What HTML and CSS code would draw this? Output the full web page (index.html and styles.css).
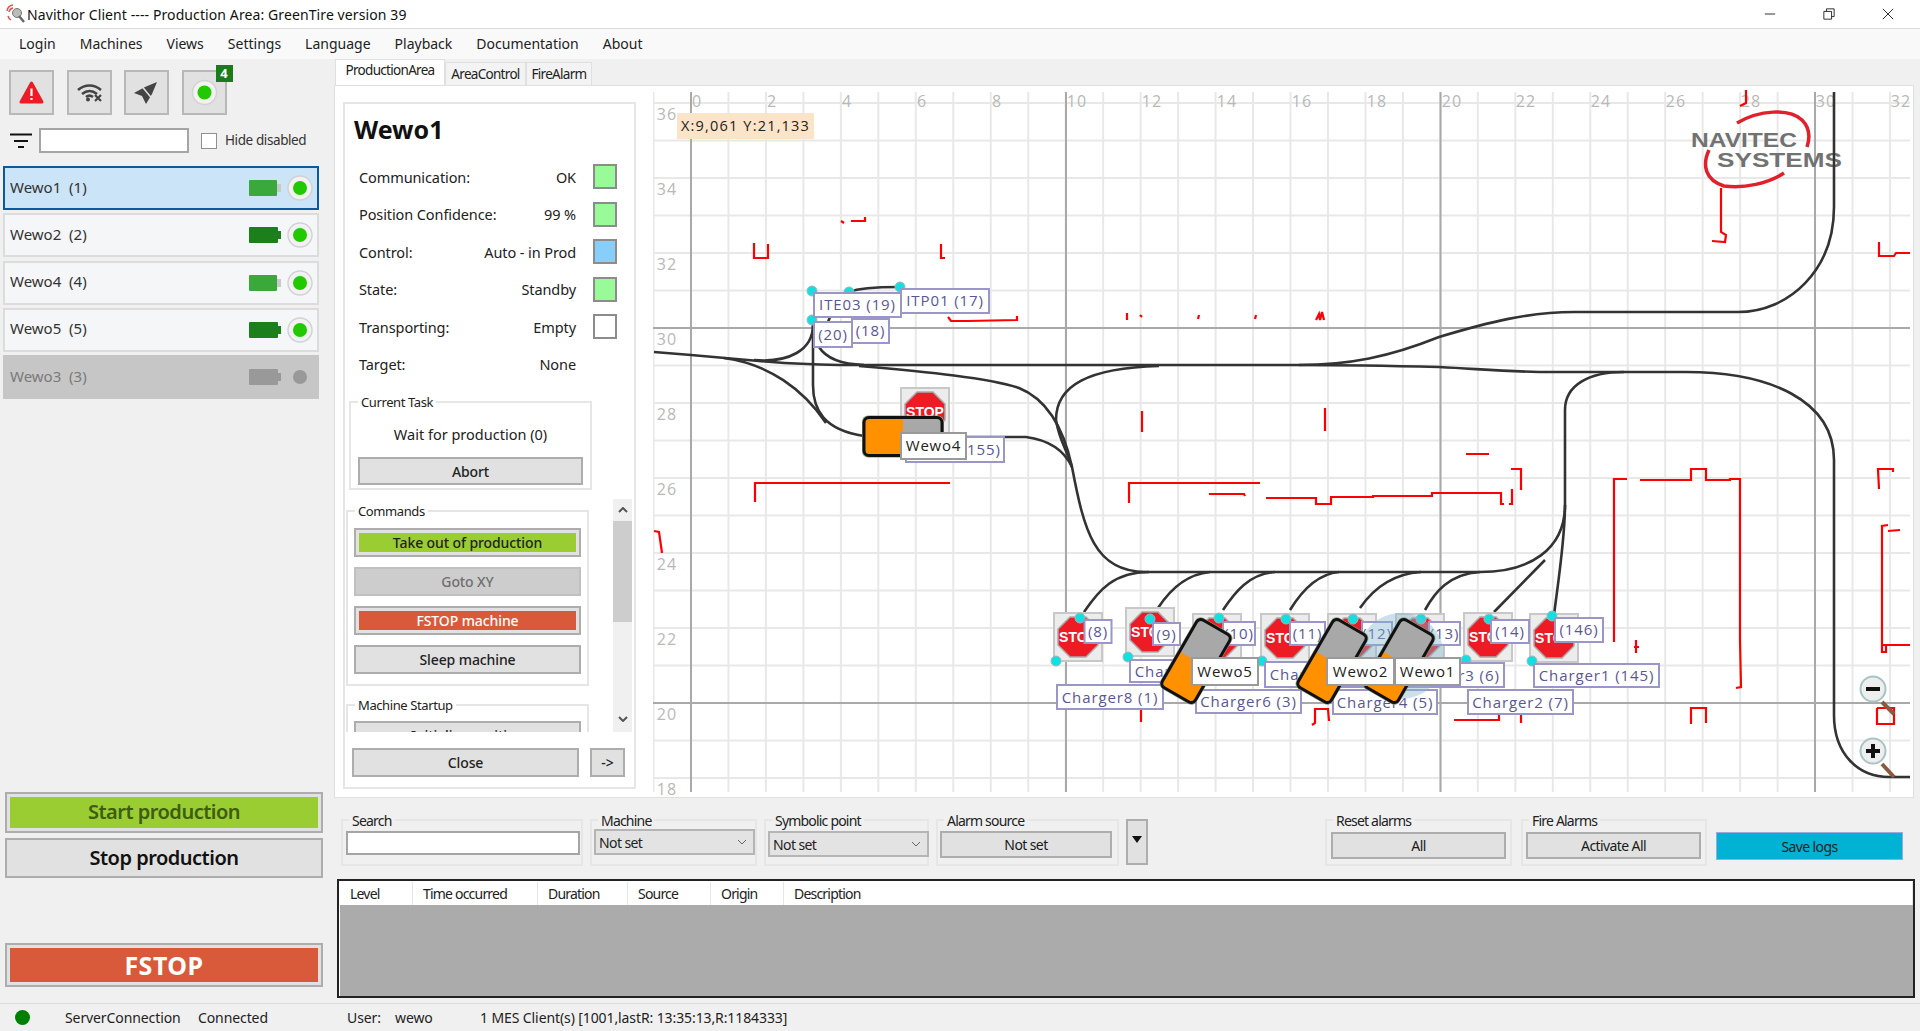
FILE: index.html
```html
<!DOCTYPE html>
<html lang="en">
<head>
<meta charset="utf-8">
<title>Navithor Client</title>
<link rel="stylesheet" href="styles.css">
</head>
<body>
<div class="window">
  <header class="titlebar">
    <svg class="app-icon" viewBox="0 0 20 20"><path d="M1 7a7 7 0 0 1 6-6M3 8a5 5 0 0 1 4-4M2 12a6 6 0 0 0 3 4" class="app-waves"/><circle cx="11" cy="9" r="4.5" class="app-glass"/><path d="M13 12l5 6" class="app-handle"/></svg>
    <span class="title-text">Navithor Client ---- Production Area: GreenTire version 39</span>
    <div class="win-controls">
      <svg class="win-btn" viewBox="0 0 14 14"><path d="M1 7h12"/></svg>
      <svg class="win-btn" viewBox="0 0 14 14"><path d="M1 4h9v9H1zM4 4V1h9v9h-3"/></svg>
      <svg class="win-btn" viewBox="0 0 14 14"><path d="M1 1l12 12M13 1L1 13"/></svg>
    </div>
  </header>
  <nav class="menubar">
    <span>Login</span><span>Machines</span><span>Views</span><span>Settings</span><span>Language</span><span>Playback</span><span>Documentation</span><span>About</span>
  </nav>
  <div class="main">
    <aside class="left">
      <div class="toolbar">
        <div class="tool">
          <svg class="tool-icon" viewBox="0 0 45 45"><path class="ic-alert" d="M22.500 13L33 32H12z"/><path class="ic-bang" d="M22.500 18.500v7.500M22.500 28v2"/></svg>
        </div>
        <div class="tool">
          <svg class="tool-icon" viewBox="0 0 45 45"><path class="ic-wifi" d="M11 20c7-6 16-6 23 0M15 24c5-4 10-4 15 0M19 27c2-1.500 5-1.500 7 0"/><circle class="ic-fill" cx="21" cy="29.500" r="2"/><path class="ic-x" d="M28 25l6 6M34 25l-6 6"/></svg>
        </div>
        <div class="tool">
          <svg class="tool-icon" viewBox="0 0 45 45"><path class="ic-fill" d="M33 12L21 17L10 23L18 26L22 34L28 24Z"/><path class="ic-slash" d="M16 14L30 31"/></svg>
        </div>
        <div class="tool tool-badged">
          <svg class="tool-icon" viewBox="0 0 45 45"><circle class="dot-ring" cx="22.500" cy="22.500" r="12"/><circle class="dot-on" cx="22.500" cy="22.500" r="7"/></svg>
          <span class="badge">4</span>
        </div>
      </div>
      <div class="filter-row">
        <svg class="filter-icon" viewBox="0 0 22 16"><path d="M0 1.500h22M4 8h14M8 14h6"/></svg>
        <div class="input filter-input"></div>
        <div class="checkbox"></div>
        <span class="hide-label">Hide disabled</span>
      </div>
      <div class="machine-list">
        <div class="machine selected"><span class="machine-name">Wewo1&nbsp; (1)</span><svg class="battery" viewBox="0 0 32 16"><rect class="bat-light" width="28" height="16" rx="1"/><rect class="bat-nub-light" x="28" y="4" width="4" height="8"/></svg><svg class="status" viewBox="0 0 26 26"><circle class="dot-ring" cx="13" cy="13" r="12"/><circle class="dot-on" cx="13" cy="13" r="7"/></svg></div>
        <div class="machine"><span class="machine-name">Wewo2&nbsp; (2)</span><svg class="battery" viewBox="0 0 32 16"><rect class="bat-dark" width="29" height="16" rx="1"/><rect class="bat-dark" x="29" y="4" width="3" height="8"/></svg><svg class="status" viewBox="0 0 26 26"><circle class="dot-ring" cx="13" cy="13" r="12"/><circle class="dot-on" cx="13" cy="13" r="7"/></svg></div>
        <div class="machine"><span class="machine-name">Wewo4&nbsp; (4)</span><svg class="battery" viewBox="0 0 32 16"><rect class="bat-light" width="28" height="16" rx="1"/><rect class="bat-nub-light" x="28" y="4" width="4" height="8"/></svg><svg class="status" viewBox="0 0 26 26"><circle class="dot-ring" cx="13" cy="13" r="12"/><circle class="dot-on" cx="13" cy="13" r="7"/></svg></div>
        <div class="machine"><span class="machine-name">Wewo5&nbsp; (5)</span><svg class="battery" viewBox="0 0 32 16"><rect class="bat-dark" width="29" height="16" rx="1"/><rect class="bat-dark" x="29" y="4" width="3" height="8"/></svg><svg class="status" viewBox="0 0 26 26"><circle class="dot-ring" cx="13" cy="13" r="12"/><circle class="dot-on" cx="13" cy="13" r="7"/></svg></div>
        <div class="machine disabled"><span class="machine-name">Wewo3&nbsp; (3)</span><svg class="battery" viewBox="0 0 32 16"><rect class="bat-off" width="29" height="16" rx="1"/><rect class="bat-off" x="29" y="4" width="3" height="8"/></svg><svg class="status" viewBox="0 0 26 26"><circle class="dot-off" cx="13" cy="13" r="7"/></svg></div>
      </div>
      <div class="prod-buttons">
        <div class="btn big big-start"><span>Start production</span></div>
        <div class="btn big big-stop"><span>Stop production</span></div>
        <div class="btn big big-fstop"><span>FSTOP</span></div>
      </div>
    </aside>
    <section class="right">
      <div class="tabs">
        <span class="tab active">ProductionArea</span>
        <span class="tab tab-ac">AreaControl</span>
        <span class="tab tab-fa">FireAlarm</span>
      </div>
      <div class="panel">
        <div class="machine-panel">
          <h1 class="panel-title">Wewo1</h1>
          <div class="info-rows">
            <div class="info"><span>Communication:</span><span class="val">OK</span><i class="swatch sw-green"></i></div>
            <div class="info"><span>Position Confidence:</span><span class="val">99 %</span><i class="swatch sw-green"></i></div>
            <div class="info"><span>Control:</span><span class="val">Auto - in Prod</span><i class="swatch sw-blue"></i></div>
            <div class="info"><span>State:</span><span class="val">Standby</span><i class="swatch sw-green"></i></div>
            <div class="info"><span>Transporting:</span><span class="val">Empty</span><i class="swatch sw-white"></i></div>
            <div class="info"><span>Target:</span><span class="val">None</span><i class="swatch sw-none"></i></div>
          </div>
          <div class="group task-group">
            <span class="group-label">Current Task</span>
            <div class="task-name">Wait for production (0)</div>
            <div class="btn cmd abort">Abort</div>
          </div>
          <div class="scroller">
            <div class="scroll-content">
              <div class="group cmd-group">
                <span class="group-label">Commands</span>
                <div class="btn cmd cmd-take"><span>Take out of production</span></div>
                <div class="btn cmd cmd-off">Goto XY</div>
                <div class="btn cmd cmd-fstop"><span>FSTOP machine</span></div>
                <div class="btn cmd">Sleep machine</div>
              </div>
              <div class="group start-group">
                <span class="group-label">Machine Startup</span>
                <div class="btn cmd">Initialize position</div>
              </div>
            </div>
            <div class="scrollbar">
              <svg class="sb-arrow" viewBox="0 0 10 6"><path d="M1 5l4-4 4 4"/></svg>
              <div class="sb-thumb"></div>
              <svg class="sb-arrow sb-bottom" viewBox="0 0 10 6"><path d="M1 1l4 4 4-4"/></svg>
            </div>
          </div>
          <div class="close-row">
            <div class="btn cmd close">Close</div>
            <div class="btn cmd arrow">-&gt;</div>
          </div>
        </div>
        <div class="map">
          <svg class="map-svg" viewBox="650 90 1262 706">
            <defs>
              <pattern id="grid" patternUnits="userSpaceOnUse" x="691" y="102" width="37.47" height="37.5">
                <rect class="grid-minor" width="2" height="37.500"/>
                <rect class="grid-minor" width="37.470" height="2"/>
              </pattern>
              <g id="stop">
                <rect class="stop-box" x="-24" y="-24" width="48" height="48"/>
                <polygon class="stop-oct" points="-8,-20 8,-20 20,-8 20,8 8,20 -8,20 -20,8 -20,-8"/>
                <text class="stop-text" x="0" y="5">STOP</text>
              </g>
              <g id="robot">
                <rect class="robot-halo" x="-21" y="-41" width="42" height="82" rx="6"/>
                <rect class="robot-orange" x="-19" y="-39" width="38" height="78" rx="5"/>
                <path class="robot-gray" d="M-19 0V-34a5 5 0 0 1 5-5H14a5 5 0 0 1 5 5V0Z"/>
                <rect class="robot-line" x="-19" y="-39" width="38" height="78" rx="5"/>
              </g>
            </defs>
            <rect x="654" y="92" width="1257" height="700" fill="url(#grid)"/>
            <path class="grid-major" d="M692 92V792M1067 92V792M1441.500 92V792M1816 92V792M654 328H1911M654 703H1911"/>

            <g class="axis">
              <text x="698" y="107">0</text><text x="773" y="107">2</text><text x="848" y="107">4</text><text x="923" y="107">6</text><text x="998" y="107">8</text><text x="1078" y="107">10</text><text x="1153" y="107">12</text><text x="1228" y="107">14</text><text x="1303" y="107">16</text><text x="1378" y="107">18</text><text x="1453" y="107">20</text><text x="1527" y="107">22</text><text x="1602" y="107">24</text><text x="1677" y="107">26</text><text x="1752" y="107">28</text><text x="1827" y="107">30</text><text x="1902" y="107">32</text>
              <text x="668" y="120">36</text><text x="668" y="195">34</text><text x="668" y="270">32</text><text x="668" y="345">30</text><text x="668" y="420">28</text><text x="668" y="495">26</text><text x="668" y="570">24</text><text x="668" y="645">22</text><text x="668" y="720">20</text><text x="668" y="795">18</text>
            </g>

            <path class="wall" d="M842 221l3 2M852 221H866V217M755 243V258H769V244M942 244V258H946M949 317l3 4H968L1018 320V316M1128 313V320M1141 315l2 2M1200 315l-1 4M1257 315l-1 4M1317 320l3-6 1 6 2-8 2 8M1143 411V432M1326 408V431M1467 454H1490M1512 469H1522V490M1513 489V504H1510M1130 503V483H1141L1261 483M1210 494H1245L1246 496M1267 498H1317V504H1332V497H1374V496H1433V493H1502V504H1505M1615 642V479H1628M1641 480H1692V469H1707V480H1731V479H1741V640L1742 687L1737 688M1637 640V653M1635 647H1640M1880 489L1879 469H1894V472M1883 652V526L1889 525M1889 531L1901 530M1883 645H1911M1883 645V652H1887V645M1692 724V708H1707V723M1878 708V724H1895V708H1878M1129 709H1142V722M1313 725L1316 723V709H1329L1330 721M1455 720H1500V715M1522 715V723M1747 90V103L1741 106M1722 188V232L1727 235L1726 242L1713 241M1880 242V256H1895L1897 253H1911M756 502V483H951M655 531L660 532L663 553"/>

            <g class="logo">
              <path class="logo-ring" d="M1738 123C1760 110 1790 108 1803 120C1811 128 1811 138 1808 147M1710 150C1703 165 1706 180 1725 186C1745 189 1770 183 1785 173"/>
              <text class="logo-text" x="1692" y="147" textLength="106" lengthAdjust="spacingAndGlyphs">NAVITEC</text>
              <text class="logo-text" x="1718" y="167" textLength="125" lengthAdjust="spacingAndGlyphs">SYSTEMS</text>
            </g>

            <path class="track" d="M655 352L692 355L760 361C775 362 790 364 840 365L1300 365C1340 365 1400 366 1440 367C1480 369 1500 371 1540 372L1687 372C1770 372 1835 400 1835 460L1835 715C1835 755 1860 777 1890 777L1911 777"/>
            <path class="track" d="M1835 92L1835 207C1835 270 1790 312 1739 312L1575 312C1530 312 1490 322 1440 337C1390 357 1350 365 1300 365"/>
            <path class="track" d="M1160 366C1090 368 1057 385 1057 420C1060 440 1068 450 1073 467C1085 530 1095 572 1147 572L1481 572C1530 572 1566 550 1566 505L1566 410C1566 385 1590 372 1625 372"/>
            <path class="track" d="M860 366C930 372 990 378 1020 388C1050 400 1065 430 1073 467"/>
            <path class="track" d="M955 437L1027 437C1050 440 1065 450 1073 467"/>
            <path class="track" d="M725 358C770 364 805 390 827 423"/>
            <path class="track" d="M814 320L814 385C814 410 825 430 865 436"/>
            <path class="track" d="M755 360C790 363 814 350 814 325M820 347C825 355 835 364 865 365M831 317L820 345M850 292C860 288 875 287 900 287"/>
            <path class="track" d="M1150 572C1115 572 1100 590 1085 612M1211 572C1190 574 1172 588 1159 608M1276 572C1250 574 1236 592 1224 610M1340 572C1318 574 1302 592 1291 610M1422 572C1390 574 1372 592 1361 608M1481 572C1450 574 1436 592 1426 610M1546 560L1495 612M1566 505C1566 540 1558 590 1555 615"/>

            <use href="#stop" x="1079" y="637"/><use href="#stop" x="1151" y="632"/><use href="#stop" x="1218" y="638"/><use href="#stop" x="1286" y="638"/><use href="#stop" x="1353" y="638"/><use href="#stop" x="1421" y="638"/><use href="#stop" x="1489" y="637"/><use href="#stop" x="1555" y="638"/><use href="#stop" x="926" y="412"/>

            <g class="node">
              <circle cx="1081" cy="618" r="5"/><circle cx="1057" cy="661" r="5"/><circle cx="1151" cy="619" r="5"/><circle cx="1129" cy="657" r="5"/><circle cx="1220" cy="618" r="5"/><circle cx="1287" cy="619" r="5"/><circle cx="1263" cy="661" r="5"/><circle cx="1354" cy="619" r="5"/><circle cx="1422" cy="619" r="5"/><circle cx="1467" cy="660" r="5"/><circle cx="1490" cy="619" r="5"/><circle cx="1553" cy="616" r="5"/><circle cx="1533" cy="661" r="5"/><circle cx="813" cy="291" r="5"/><circle cx="850" cy="292" r="5"/><circle cx="901" cy="287" r="5"/><circle cx="813" cy="320" r="5"/>
            </g>

            <g class="labels">
              <rect x="1085.500" y="620" width="27" height="23"/><text x="1099" y="637">(8)</text>
              <rect x="1154" y="623" width="27" height="22"/><text x="1167.500" y="640">(9)</text>
              <rect x="1131" y="660" width="106" height="22"/><text x="1184" y="677">Charger7 (2)</text>
              <rect x="1058" y="685" width="106" height="24"/><text x="1111" y="703">Charger8 (1)</text>
              <rect x="1197" y="690" width="105" height="23"/><text x="1249.500" y="707">Charger6 (3)</text>
              <rect x="1224" y="622" width="32" height="23"/><text x="1240" y="639">(10)</text>
              <rect x="1291" y="622" width="35" height="23"/><text x="1308.500" y="639">(11)</text>
              <rect x="1266" y="662" width="106" height="25"/><text x="1319" y="680">Charger5 (4)</text>
              <rect x="1363" y="622" width="30" height="23"/><text x="1378" y="639">(12)</text>
              <rect x="1430" y="622" width="31" height="23"/><text x="1445.500" y="639">(13)</text>
              <rect x="1334" y="690" width="104" height="24"/><text x="1386" y="708">Charger4 (5)</text>
              <rect x="1492" y="620" width="38" height="23"/><text x="1511" y="637">(14)</text>
              <rect x="1400" y="663" width="105" height="24"/><text x="1452.500" y="681">Charger3 (6)</text>
              <rect x="1556" y="618" width="48" height="24"/><text x="1580" y="635">(146)</text>
              <rect x="1535" y="664" width="125" height="23"/><text x="1597.500" y="681">Charger1 (145)</text>
              <rect x="1469" y="690" width="105" height="24"/><text x="1521.500" y="708">Charger2 (7)</text>
              <rect x="902" y="289" width="88" height="24"/><text x="946" y="306">ITP01 (17)</text>
              <rect x="815" y="293" width="87" height="24"/><text x="858.500" y="310">ITE03 (19)</text>
              <rect x="853" y="319" width="37" height="24"/><text x="871.500" y="336">(18)</text>
              <rect x="815" y="322" width="38" height="25"/><text x="834" y="340">(20)</text>
              <rect x="907" y="437" width="98" height="25"/><text x="985" y="455">155)</text>
            </g>

            <circle class="halo" cx="1402" cy="656" r="43"/>
            <use href="#robot" transform="translate(1197 661) rotate(30)"/>
            <use href="#robot" transform="translate(1333 661) rotate(30)"/>
            <use href="#robot" transform="translate(1400 661) rotate(30)"/>
            <use href="#robot" transform="translate(904 436.500) rotate(90)"/>

            <g class="robot-labels">
              <rect x="1193" y="658" width="66" height="27"/><text x="1226" y="677">Wewo5</text>
              <rect x="1328" y="658" width="67" height="27"/><text x="1361.500" y="677">Wewo2</text>
              <rect x="1396" y="658" width="65" height="27"/><text x="1428.500" y="677">Wewo1</text>
              <rect x="902" y="433" width="65" height="26"/><text x="934.500" y="451">Wewo4</text>
            </g>

            <rect class="coords-bg" x="678" y="113" width="137" height="26"/>
            <text class="coords" x="746.500" y="131">X:9,061 Y:21,133</text>

            <g class="zoomer">
              <path class="zoom-handle" d="M1883 702L1895 714"/>
              <circle class="zoom-glass" cx="1874" cy="689" r="12.500"/>
              <path class="zoom-sign" d="M1867 689H1881"/>
              <path class="zoom-handle" d="M1883 764L1895 777"/>
              <circle class="zoom-glass" cx="1874" cy="751" r="12.500"/>
              <path class="zoom-sign" d="M1867 751H1881M1874 744V758"/>
            </g>
          </svg>
        </div>
      </div>
      <div class="filters">
        <div class="group f-group f-search"><span class="group-label">Search</span><div class="input f-input"></div></div>
        <div class="group f-group f-machine"><span class="group-label">Machine</span><div class="select"><span>Not set</span><svg class="chev" viewBox="0 0 10 6"><path d="M1 1l4 4 4-4"/></svg></div></div>
        <div class="group f-group f-symbol"><span class="group-label">Symbolic point</span><div class="select"><span>Not set</span><svg class="chev" viewBox="0 0 10 6"><path d="M1 1l4 4 4-4"/></svg></div></div>
        <div class="group f-group f-alarm"><span class="group-label">Alarm source</span><div class="btn f-btn">Not set</div></div>
        <div class="btn f-drop"><svg class="drop-tri" viewBox="0 0 10 7"><path d="M0 0h10L5 7z"/></svg></div>
        <div class="group f-group f-reset"><span class="group-label">Reset alarms</span><div class="btn f-btn">All</div></div>
        <div class="group f-group f-fire"><span class="group-label">Fire Alarms</span><div class="btn f-btn">Activate All</div></div>
        <div class="btn f-save">Save logs</div>
      </div>
      <div class="log">
        <div class="log-head"><span>Level</span><span>Time occurred</span><span>Duration</span><span>Source</span><span>Origin</span><span>Description</span></div>
        <div class="log-body"></div>
      </div>
    </section>
  </div>
  <footer class="statusbar">
    <i class="conn-dot"></i>
    <span class="st-server">ServerConnection</span>
    <span class="st-conn">Connected</span>
    <span class="st-user">User:</span>
    <span class="st-name">wewo</span>
    <span class="st-mes">1 MES Client(s) [1001,lastR: 13:35:13,R:1184333]</span>
  </footer>
</div>
</body>
</html>
```
FILE: styles.css
```css
* { box-sizing: border-box; }
html, body { margin: 0; padding: 0; }
body { font-family: "Noto Sans", "Open Sans", sans-serif; color: #1a1a1a; background: #f0f0f0; }
.window { width: 1920px; height: 1031px; display: flex; flex-direction: column; overflow: hidden; background: #f0f0f0; }

/* title and menu */
.titlebar { height: 29px; background: #fff; display: flex; align-items: center; padding-left: 6px; border-bottom: 1px solid #dcdcdc; flex: none; }
.app-icon { width: 20px; height: 20px; margin-right: 1px; fill: none; }
.app-waves { stroke: #e2504c; stroke-width: 1.4; }
.app-glass { fill: #bbb; stroke: #777; }
.app-handle { stroke: #666; stroke-width: 2.4; }
.title-text { font-size: 14px; color: #111; letter-spacing: 0.100px; }
.win-controls { margin-left: auto; display: flex; gap: 47px; padding-right: 26px; }
.win-btn { width: 12px; height: 12px; fill: none; stroke: #111; stroke-width: 1; }
.menubar { height: 30px; flex: none; background: #f9f9f9; display: flex; align-items: center; padding-bottom: 2px; font-size: 14px; color: #222; }
.menubar span { margin-left: 24px; }
.menubar span:first-child { margin-left: 19px; }

.main { flex: 1; display: flex; min-height: 0; }

/* left column */
.left { width: 334px; flex: none; display: flex; flex-direction: column; padding-top: 11px; padding-bottom: 16px; }
.toolbar { display: flex; gap: 12.500px; margin-left: 9px; height: 45px; }
.tool { width: 45px; height: 45px; background: #e1e1e1; border: 2px solid #b8b8b8; position: relative; }
.tool-icon { display: block; width: 45px; height: 45px; margin: -2px; }
.ic-alert { fill: #ed1c24; stroke: #ed1c24; stroke-width: 3; stroke-linejoin: round; }
.ic-bang { fill: none; stroke: #fff; stroke-width: 2.200; }
.ic-wifi { fill: none; stroke: #444; stroke-width: 2.600; }
.ic-fill { fill: #444; }
.ic-x { fill: none; stroke: #444; stroke-width: 2.200; }
.ic-slash { fill: none; stroke: #e1e1e1; stroke-width: 1.500; }
.dot-ring { fill: #f2f2f2; stroke: #d2d2d2; stroke-width: 1.500; }
.dot-on { fill: #22c900; }
.dot-off { fill: #999; }
.badge { position: absolute; right: -8px; top: -7px; width: 17px; height: 17px; background: #1b7a1b; color: #fff; font-size: 13px; font-weight: 700; text-align: center; line-height: 17px; }
.filter-row { display: flex; align-items: center; height: 25px; margin-top: 13px; margin-left: 10px; }
.filter-icon { width: 22px; height: 16px; fill: none; stroke: #111; stroke-width: 2; }
.input { background: #fff; border: 2px solid #a5a5a5; }
.filter-input { width: 150px; height: 25px; margin-left: 7px; }
.checkbox { width: 16px; height: 16px; background: #fff; border: 1.500px solid #8f8f8f; margin-left: 12px; }
.hide-label { margin-left: 8px; font-size: 13.500px; line-height: 16px; margin-top: -2px; letter-spacing: -0.400px; color: #333; }
.machine-list { margin: 13px 0 0 3px; width: 316px; display: flex; flex-direction: column; gap: 3.250px; }
.machine { height: 44px; display: flex; align-items: center; background: #f5f6f8; border: 2px solid #dcdcdc; padding-left: 5px; padding-right: 4px; }
.machine-name { font-size: 15px; color: #333; flex: 1; padding-bottom: 3px; }
.machine.selected { background: #cce4f7; border-color: #0a5a9e; }
.machine.disabled { background: #c6c6c6; border-color: #c6c6c6; }
.machine.disabled .machine-name { color: #7a7a7a; }
.battery { width: 32px; height: 16px; margin-right: 6px; }
.status { width: 26px; height: 26px; }
.bat-light { fill: #3aa83a; }
.bat-nub-light { fill: #c9c9c9; }
.bat-dark { fill: #1c7f1c; }
.bat-off { fill: #999; }

.prod-buttons { margin: auto 0 0 5px; width: 318px; display: flex; flex-direction: column; }
.btn { display: flex; align-items: center; justify-content: center; background: #e1e1e1; border: 2px solid #adadad; text-align: center; color: #1a1a1a; }
.big { font-size: 20px; font-weight: 600; letter-spacing: -0.500px; }
.big-start { height: 41px; padding: 3px; align-items: stretch; color: #3e5c10; }
.big-start span, .big-fstop span { flex: 1; display: flex; align-items: center; justify-content: center; }
.big-start span { background: #9acd32; padding-bottom: 3px; }
.big-stop { height: 40px; margin-top: 5px; color: #111; padding-bottom: 2px; }
.big-fstop { height: 44px; margin-top: 65px; padding: 3px; align-items: stretch; color: #fff; font-size: 25px; font-weight: 700; letter-spacing: 0.500px; }
.big-fstop span { background: #d95a3b; padding-bottom: 1px; }

/* right column */
.right { flex: 1; display: flex; flex-direction: column; min-width: 0; padding-bottom: 5px; }
.tabs { height: 26px; display: flex; align-items: flex-end; padding-left: 1px; font-size: 13.500px; letter-spacing: -0.700px; flex: none; }
.tab { height: 23px; display: flex; align-items: center; justify-content: center; background: #f3f3f3; border: 1px solid #e0e0e0; border-bottom: none; color: #222; }
.tab.active { height: 26px; width: 110px; background: #fff; align-items: flex-start; padding-top: 1px; }
.tab-ac { width: 81px; }
.tab-fa { width: 66px; }
.panel { height: 713px; flex: none; margin-right: 6px; background: #fff; border: 1px solid #e0e0e0; display: flex; }
.machine-panel { width: 293px; height: 687px; flex: none; margin: 16px 0 0 8px; border: 2px solid #e6e6e6; position: relative; }
.panel-title { margin: 7px 0 0 9px; font-size: 25px; line-height: 36px; font-weight: 700; color: #111; }
.info-rows { margin: 11px 0 0 14px; width: 258px; }
.info { height: 37.500px; display: grid; grid-template-columns: 1fr auto 24px; align-items: center; font-size: 14.500px; letter-spacing: -0.100px; color: #222; }
.val { margin-right: 17px; }
.swatch { display: block; width: 24px; height: 25px; border: 2px solid #8c8c8c; }
.sw-green { background: #98fb98; }
.sw-blue { background: #87cefa; }
.sw-white { background: #fff; }
.sw-none { visibility: hidden; }
.group { border: 2px solid #e6e6e6; position: relative; }
.group-label { position: absolute; left: 7px; top: -9px; padding: 0 3px; font-size: 13px; line-height: 16px; letter-spacing: -0.400px; color: #222; background: #fff; white-space: nowrap; }
.task-group { width: 243px; height: 89px; margin: 18px 0 0 4px; padding: 0 7px; }
.task-name { text-align: center; font-size: 14.500px; height: 54px; padding-top: 21px; line-height: 20px; color: #222; }
.cmd { height: 29px; font-size: 14px; font-weight: 500; letter-spacing: -0.100px; color: #222; }
.abort { height: 28px; }
.scroller { height: 233px; margin-top: 9px; display: flex; overflow: hidden; }
.scroll-content { width: 268px; padding: 11px 0 0 1px; }
.cmd-group { width: 243px; height: 176px; padding: 16px 6px 0; display: flex; flex-direction: column; gap: 10px; }
.cmd-take, .cmd-fstop { padding: 3px; align-items: stretch; }
.cmd-take span, .cmd-fstop span { flex: 1; display: flex; align-items: center; justify-content: center; }
.cmd-take span { background: #9acd32; }
.cmd-fstop span { background: #d95a3b; color: #fff; }
.cmd-off { background: #cdcdcd; border-color: #c0c0c0; color: #6f6f6f; }
.start-group { width: 243px; height: 60px; margin-top: 18px; padding: 15px 6px 0; }
.scrollbar { width: 19px; background: #f0f0f0; display: flex; flex-direction: column; align-items: center; padding-top: 8px; }
.sb-arrow { width: 10px; height: 6px; fill: none; stroke: #555; stroke-width: 2; flex: none; }
.sb-thumb { width: 19px; height: 101px; background: #cdcdcd; margin-top: 8px; }
.sb-bottom { margin-top: auto; margin-bottom: 10px; }
.close-row { display: flex; margin: 16px 0 0 7px; gap: 11px; }
.close { width: 227px; height: 29px; }
.arrow { width: 35px; height: 29px; }
.map { flex: 1; margin: 4px 0 0 13px; min-width: 0; overflow: hidden; }
.map-svg { display: block; width: 1262px; height: 706px; font-family: "Open Sans", "Noto Sans", sans-serif; }
.grid-minor { fill: #e8e8e8; }
.grid-major { fill: none; stroke: #a9a9a9; stroke-width: 2; }
.axis text { font-size: 16px; fill: #b8b8b8; text-anchor: middle; letter-spacing: 1px; }
.wall { fill: none; stroke: #ff0000; stroke-width: 2.200; }
.track { fill: none; stroke: #333; stroke-width: 2.600; }
.logo-ring { fill: none; stroke: #e2202c; stroke-width: 3.500; }
.logo-text { font-family: "Liberation Sans", sans-serif; font-size: 21px; font-weight: 700; fill: #727272; }
.stop-box { fill: #ececec; stroke: #c8c8c8; stroke-width: 2; }
.stop-oct { fill: #ed1c24; stroke: #aaa; stroke-width: 1.500; }
.stop-text { font-family: "Liberation Sans", sans-serif; font-size: 14px; font-weight: 700; fill: #fff; text-anchor: middle; }
.node circle { fill: #12e0e0; stroke: #9fb9b9; stroke-width: 1; }
.labels rect { fill: #fff; stroke: #9a96c8; stroke-width: 2; }
.labels text { font-size: 15px; fill: #5a5696; text-anchor: middle; letter-spacing: 0.900px; }
.halo { fill: rgba(130, 180, 205, 0.420); }
.robot-halo { fill: #8a9a80; }
.robot-orange { fill: #ff9000; }
.robot-gray { fill: #a8a8a8; }
.robot-line { fill: none; stroke: #111; stroke-width: 3; }
.robot-labels rect { fill: #fff; stroke: #9a9a9a; stroke-width: 2; }
.robot-labels text { font-size: 15px; fill: #222; text-anchor: middle; letter-spacing: 0.800px; }
.coords-bg { fill: #fbe4c8; }
.coords { font-size: 14.500px; fill: #222; text-anchor: middle; letter-spacing: 1.200px; }
.zoom-handle { fill: none; stroke: #8a5a3c; stroke-width: 4; }
.zoom-glass { fill: #eeeeee; stroke: #a8c4c4; stroke-width: 2; }
.zoom-sign { fill: none; stroke: #111; stroke-width: 4; }

/* filters */
.filters { height: 81px; flex: none; display: flex; gap: 7px; padding: 21px 17px 0 7px; }
.filters .group { height: 47px; }
.filters .group-label { background: #f0f0f0; letter-spacing: -0.800px; font-size: 14px; top: -8px; left: 6px; }
.f-search { width: 242px; padding: 10px 1px 0 3px; }
.f-input { height: 24px; }
.f-machine { width: 167px; padding: 8px 0 0 2px; }
.f-symbol { width: 165px; padding: 10px 0 0 2px; }
.f-alarm { width: 183px; padding: 10px 5px 0 2px; }
.select { width: 161px; height: 26px; background: #e3e3e3; border: 2px solid #b5b5b5; display: flex; align-items: center; justify-content: space-between; padding: 0 6px 0 3px; font-size: 14px; letter-spacing: -0.600px; color: #222; }
.chev { width: 10px; height: 6px; fill: none; stroke: #666; stroke-width: 1; }
.f-btn { height: 27px; font-size: 14px; letter-spacing: -0.600px; }
.f-drop { width: 22px; height: 46px; }
.drop-tri { width: 10px; height: 7px; fill: #111; margin-bottom: 6px; }
.f-reset { width: 187px; margin-left: auto; padding: 11px 4px 0 4px; }
.f-fire { width: 186px; margin-left: 2px; padding: 11px 4px 0 3px; }
.f-save { width: 187px; height: 28px; margin: 13px 0 0 2px; background: #00b2d4; border: 1px solid #99aadd; font-size: 14px; letter-spacing: -0.600px; color: #222; }

/* log */
.log { flex: 1; margin: 0 5px 0 3px; border: 2px solid #222; padding: 1px 0 0 1px; background: #fff; display: flex; flex-direction: column; }
.log-head { height: 23px; display: grid; grid-template-columns: 73px 125px 90px 83px 73px 1fr; background: #fff; font-size: 14px; letter-spacing: -0.800px; color: #222; flex: none; }
.log-head span { padding-left: 10px; border-right: 1px solid #e5e5e5; line-height: 24px; }
.log-body { flex: 1; background: #ababab; }

/* status bar */
.statusbar { height: 28px; flex: none; display: flex; align-items: center; border-top: 1px solid #dcdcdc; font-size: 14px; letter-spacing: -0.100px; color: #222; background: #f0f0f0; }
.conn-dot { width: 15px; height: 15px; border-radius: 50%; background: #008000; margin-left: 15px; }
.st-server { margin-left: 35px; width: 133px; }
.st-conn { width: 149px; }
.st-user { width: 48px; }
.st-name { width: 85px; }
```
